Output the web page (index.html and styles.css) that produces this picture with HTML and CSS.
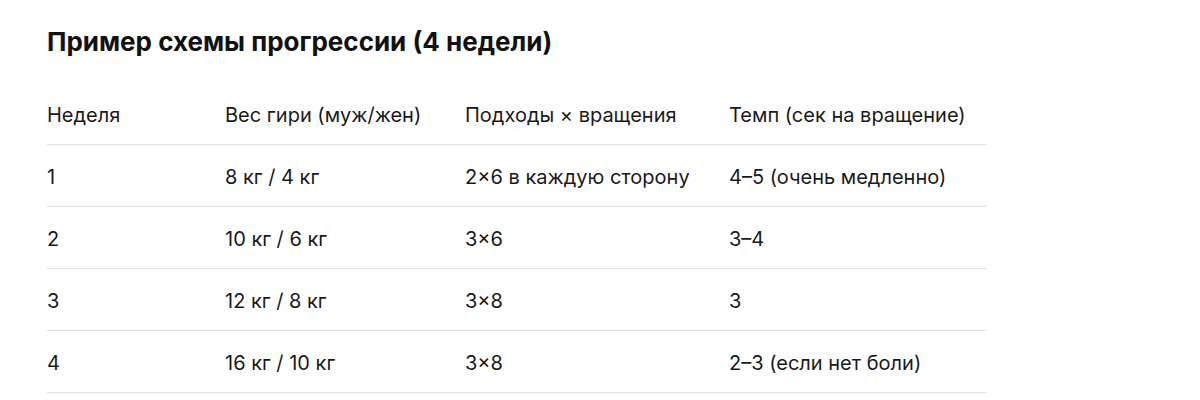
FILE: index.html
```html
<!DOCTYPE html>
<html lang="ru">
<head>
<meta charset="utf-8">
<link rel="stylesheet" href="styles.css">
</head>
<body>
<section class="content">
  <h2 class="title">Пример схемы прогрессии (4 недели)</h2>
  <table class="plan">
    <thead>
      <tr>
        <th class="c1">Неделя</th>
        <th class="c2">Вес гири (муж/жен)</th>
        <th class="c3">Подходы × вращения</th>
        <th class="c4">Темп (сек на вращение)</th>
      </tr>
    </thead>
    <tbody>
      <tr><td>1</td><td>8 кг / 4 кг</td><td>2×6 в каждую сторону</td><td>4–5 (очень медленно)</td></tr>
      <tr><td>2</td><td>10 кг / 6 кг</td><td>3×6</td><td>3–4</td></tr>
      <tr><td>3</td><td>12 кг / 8 кг</td><td>3×8</td><td>3</td></tr>
      <tr><td>4</td><td>16 кг / 10 кг</td><td>3×8</td><td>2–3 (если нет боли)</td></tr>
    </tbody>
  </table>
</section>
</body>
</html>
```
FILE: styles.css
```css
html, body {
  margin: 0;
  padding: 0;
  background: #ffffff;
}
body {
  font-family: Inter, "Noto Sans", "Liberation Sans", sans-serif;
  color: #1a1a1a;
}
.content {
  padding: 27px 47px 0;
}
.title {
  margin: 0;
  font-size: 26px;
  line-height: 30px;
  font-weight: 700;
  color: #111111;
}
.plan {
  margin-top: 46px;
  border-collapse: collapse;
  width: 940px;
  table-layout: fixed;
  font-size: 20px;
  line-height: 24px;
}
.plan th {
  font-weight: 400;
  text-align: left;
  padding: 0 0 17px;
  border-bottom: 1px solid #e0e0e0;
}
.plan td {
  padding: 20px 0 17px;
  border-bottom: 1px solid #e0e0e0;
}
.c1 { width: 178px; }
.c2 { width: 240px; }
.c3 { width: 264px; }
.c4 { width: auto; }
```
